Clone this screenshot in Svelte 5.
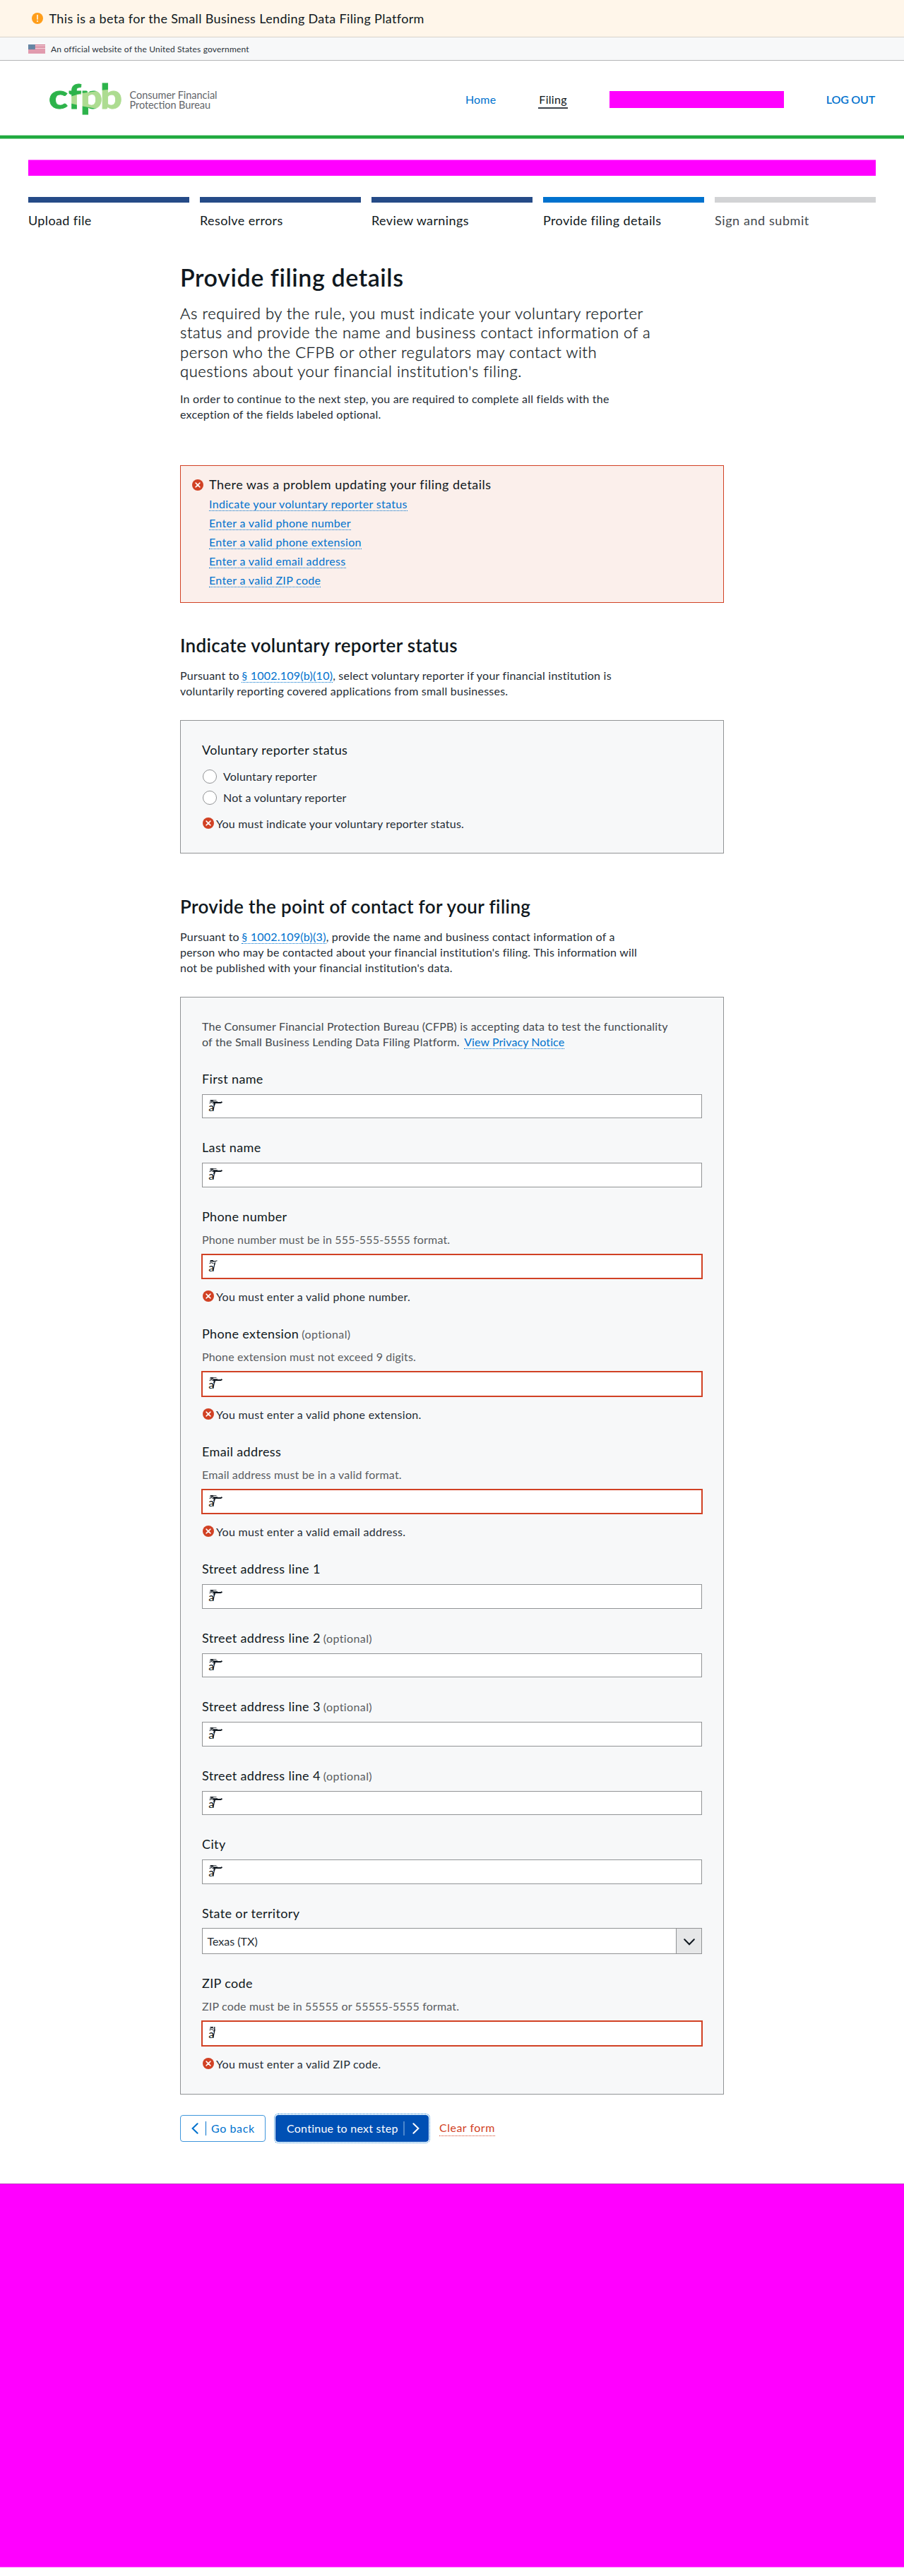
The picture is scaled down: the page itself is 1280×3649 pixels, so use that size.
<script>
  const steps = [
    { label: 'Upload file', state: 'done' },
    { label: 'Resolve errors', state: 'done' },
    { label: 'Review warnings', state: 'done' },
    { label: 'Provide filing details', state: 'current' },
    { label: 'Sign and submit', state: 'todo' }
  ];

  const problems = [
    'Indicate your voluntary reporter status',
    'Enter a valid phone number',
    'Enter a valid phone extension',
    'Enter a valid email address',
    'Enter a valid ZIP code'
  ];

  const fields = [
    { label: 'First name', mark: 'long' },
    { label: 'Last name', mark: 'long' },
    {
      label: 'Phone number',
      hint: 'Phone number must be in 555-555-5555 format.',
      error: 'You must enter a valid phone number.',
      mark: 'mid'
    },
    {
      label: 'Phone extension',
      optional: true,
      hint: 'Phone extension must not exceed 9 digits.',
      error: 'You must enter a valid phone extension.',
      mark: 'long'
    },
    {
      label: 'Email address',
      hint: 'Email address must be in a valid format.',
      error: 'You must enter a valid email address.',
      mark: 'long'
    },
    { label: 'Street address line 1', mark: 'long' },
    { label: 'Street address line 2', optional: true, mark: 'long' },
    { label: 'Street address line 3', optional: true, mark: 'long' },
    { label: 'Street address line 4', optional: true, mark: 'long' },
    { label: 'City', mark: 'long' },
    { label: 'State or territory', value: 'Texas (TX)' },
    {
      label: 'ZIP code',
      hint: 'ZIP code must be in 55555 or 55555-5555 format.',
      error: 'You must enter a valid ZIP code.',
      mark: 'short'
    }
  ];
</script>

{#snippet errorIcon()}
  <svg class="icon" viewBox="0 0 16 16" aria-hidden="true">
    <circle cx="8" cy="8" r="8" fill="#d14124" />
    <path d="M5.1 5.1l5.8 5.8M10.9 5.1l-5.8 5.8" stroke="#fff" stroke-width="1.5" stroke-linecap="round" />
  </svg>
{/snippet}

<div class="beta">
  <svg class="icon" viewBox="0 0 16 16" aria-hidden="true">
    <circle cx="8" cy="8" r="8" fill="#ff9e1b" />
    <path d="M8 3.4v5.8" stroke="#fff" stroke-width="1.5" stroke-linecap="round" />
    <circle cx="8" cy="12" r="1" fill="#fff" />
  </svg>
  <span>This is a beta for the Small Business Lending Data Filing Platform</span>
</div>

<div class="gov">
  <svg class="flag" viewBox="0 0 24 13" aria-hidden="true">
    <rect width="24" height="13" fill="#e39aae" />
    <path d="M0 1.5h24M0 3.5h24M0 5.5h24" stroke="#f6dbe2" stroke-width=".9" />
    <path d="M0 7.5h24M0 9.5h24M0 11.5h24" stroke="#dd92a7" stroke-width=".9" />
    <path d="M9 .5h15M9 2.5h15M9 4.5h15" stroke="#cf6b85" stroke-width=".9" />
    <rect width="9.7" height="7" fill="#587a9c" />
    <path d="M1 1.5h8M1 3.5h8M1 5.5h8" stroke="#7d99b5" stroke-width=".7" stroke-dasharray="1 1" />
  </svg>
  <span>An official website of the United States government</span>
</div>

<header>
  <svg class="logo" viewBox="0 0 240 60" role="img" aria-label="cfpb Consumer Financial Protection Bureau">
    <defs>
      <pattern id="beam" patternUnits="userSpaceOnUse" width="240" height="60">
        <rect width="240" height="60" fill="#2cb34a" />
        <path d="M24 24.5L46 18L73 14.2L76 13.4L106 11V60H85L73 41L47 36.5L24 31Z" fill="#addc91" />
      </pattern>
    </defs>
    <g class="brand">
      <text x="-1" y="40" textLength="27" lengthAdjust="spacingAndGlyphs">c</text>
      <text x="27" y="40" textLength="18" lengthAdjust="spacingAndGlyphs">f</text>
      <text x="44" y="40" textLength="31" lengthAdjust="spacingAndGlyphs">p</text>
      <text x="72" y="40" textLength="31" lengthAdjust="spacingAndGlyphs">b</text>
    </g>
    <g class="agency">
      <text x="113.5" y="26" textLength="124">Consumer Financial</text>
      <text x="113.5" y="40.3" textLength="114.5">Protection Bureau</text>
    </g>
  </svg>
  <nav>
    <a class="home" href="#home">Home</a>
    <a class="filing" href="#filing">Filing</a>
    <span class="account"></span>
    <a class="logout" href="#logout">LOG OUT</a>
  </nav>
</header>
<div class="rule"></div>

<div class="institution"></div>

<ol class="steps">
  {#each steps as step}
    <li class={step.state}>{step.label}</li>
  {/each}
</ol>

<main>
  <h1>Provide filing details</h1>
  <p class="lead">
    As required by the rule, you must indicate your voluntary reporter<br />
    status and provide the name and business contact information of a<br />
    person who the CFPB or other regulators may contact with<br />
    questions about your financial institution's filing.
  </p>
  <p class="intro">
    In order to continue to the next step, you are required to complete all fields with the<br />
    exception of the fields labeled optional.
  </p>

  <section class="alert">
    {@render errorIcon()}
    <div>
      <strong>There was a problem updating your filing details</strong>
      <ul>
        {#each problems as problem}
          <li><a href="#form">{problem}</a></li>
        {/each}
      </ul>
    </div>
  </section>

  <h2>Indicate voluntary reporter status</h2>
  <p>
    Pursuant to <a href="#b10">§ 1002.109(b)(10)</a>, select voluntary reporter if your financial institution is<br />
    voluntarily reporting covered applications from small businesses.
  </p>
  <section class="card status">
    <div class="label">Voluntary reporter status</div>
    <div class="radios">
      <label><span class="radio"></span>Voluntary reporter</label>
      <label><span class="radio"></span>Not a voluntary reporter</label>
    </div>
    <div class="error">{@render errorIcon()}You must indicate your voluntary reporter status.</div>
  </section>

  <h2 class="second">Provide the point of contact for your filing</h2>
  <p>
    Pursuant to <a href="#b3">§ 1002.109(b)(3)</a>, provide the name and business contact information of a<br />
    person who may be contacted about your financial institution's filing. This information will<br />
    not be published with your financial institution's data.
  </p>
  <section class="card contact">
    <p class="privacy">
      The Consumer Financial Protection Bureau (CFPB) is accepting data to test the functionality<br />
      of the Small Business Lending Data Filing Platform. <a href="#privacy">View Privacy Notice</a>
    </p>
    {#each fields as field}
      <div class="field">
        <div class="label">
          {field.label}{#if field.optional}<small>(optional)</small>{/if}
        </div>
        {#if field.hint}<div class="hint">{field.hint}</div>{/if}
        {#if field.value}
          <div class="select">
            <span>{field.value}</span>
            <span class="arrow">
              <svg viewBox="0 0 16 10" aria-hidden="true"><path d="M1.2 1.2L8 8.2L14.8 1.2" fill="none" stroke="#101820" stroke-width="2" stroke-linecap="round" /></svg>
            </span>
          </div>
        {:else}
          <div class={['input', field.error && 'invalid']}>
            <svg class="mark" viewBox="0 0 22 20" aria-hidden="true">
              <text x="0.2" y="16.6">a</text>
              <path d="M1.5 5.6l3-1 3 1.2M2 3.4l3-.9 2.6.8M2.6 1.5h4.4" stroke-width="1" />
              <path d="M9.2 5L6.8 16.3" stroke-width="1.2" />
              {#if field.mark === 'long'}
                <path d="M3 1.5h8.5M4 3.5h9" stroke-width="1.2" stroke-opacity=".75" />
                <path d="M7 5h10.5l2-1.2" stroke-width="2" />
                <path d="M9 5.5L8 9" stroke-width="2" />
              {:else if field.mark === 'mid'}
                <path d="M3 2.5h7l2.5-.8M9.5 3.5L8.5 8" stroke-width="1.1" />
              {:else}
                <path d="M8.8 1v4l-1 3" stroke-width="1.3" />
              {/if}
            </svg>
          </div>
        {/if}
        {#if field.error}
          <div class="error">{@render errorIcon()}{field.error}</div>
        {/if}
      </div>
    {/each}
  </section>

  <div class="actions">
    <button class="back">
      <svg viewBox="0 0 10 16" aria-hidden="true"><path d="M8.6 1.2L1.6 8l7 6.8" /></svg>
      <i></i><span>Go back</span>
    </button>
    <button class="next">
      <span>Continue to next step</span><i></i>
      <svg viewBox="0 0 10 16" aria-hidden="true"><path d="M1.4 1.2L8.4 8l-7 6.8" /></svg>
    </button>
    <a class="clear" href="#clear">Clear form</a>
  </div>
</main>

<footer></footer>

<style>
  :global(body) {
    background: #fff;
    font-family: Lato, sans-serif;
    color: #101820;
  }
  :global(#app) {
    width: 1280px;
    height: 3649px;
    overflow: hidden;
  }
  a {
    color: #0072ce;
    text-decoration: none;
  }
  .icon {
    width: 16px;
    height: 16px;
    flex: none;
    display: block;
  }

  .beta {
    height: 52px;
    border-bottom: 1px solid #d8d3cc;
    background: #fff6ea;
    display: flex;
    align-items: center;
    padding-left: 45px;
    gap: 8.5px;
    font-size: 18px;
    letter-spacing: 0.35px;
  }
  .gov {
    height: 32px;
    border-bottom: 1px solid #b4b5b6;
    background: #f7f8f9;
    display: flex;
    align-items: center;
    padding-left: 40px;
    gap: 8px;
    font-size: 12px;
    letter-spacing: 0.18px;
    color: #2b333b;
  }
  .gov span {
    padding-top: 1px;
  }
  .flag {
    width: 24px;
    height: 13px;
    opacity: 0.95;
  }

  header {
    height: 105px;
    display: flex;
    justify-content: space-between;
    padding: 0 41px 0 70px;
  }
  .logo {
    width: 240px;
    height: 60px;
    margin-top: 28px;
  }
  .brand {
    font-size: 48px;
    font-weight: 900;
    fill: url(#beam);
    stroke: url(#beam);
    stroke-width: 0.8;
  }
  .agency {
    font-size: 14.5px;
    fill: #63666a;
  }
  nav {
    display: flex;
    align-items: center;
    height: 24px;
    margin-top: 43px;
    font-size: 16px;
    letter-spacing: 0.2px;
  }
  nav a {
    line-height: 22px;
  }
  .filing {
    margin-left: 60px;
    padding: 2px 1px 0;
    border-bottom: 2px solid #3b424a;
    color: #101820;
    letter-spacing: 0.3px;
  }
  .account {
    width: 247px;
    height: 24.5px;
    margin: 0 60px 0 59px;
    background: #f0f;
  }
  .logout {
    font-weight: 600;
    letter-spacing: -0.2px;
  }
  .rule {
    height: 6px;
    background: linear-gradient(#bde5c6 1px, #20aa3f 1px 5px, #8fd4a0 5px);
  }

  .institution {
    height: 23px;
    margin: 29px 40px 30px;
    background: linear-gradient(#ff80ff 1px, #f0f 1px);
  }

  .steps {
    display: grid;
    grid-template-columns: repeat(5, 1fr);
    gap: 15px;
    margin: 0 40px;
    padding: 0;
    list-style: none;
    font-size: 18px;
    line-height: 22px;
    letter-spacing: 0.38px;
  }
  .steps li {
    padding-top: 14px;
    border-top: 8px solid #254b87;
  }
  .steps .current {
    border-color: #0072ce;
  }
  .steps .todo {
    border-color: #d2d3d5;
    color: #43484e;
    letter-spacing: 0.58px;
  }

  main {
    width: 770px;
    margin: 49px 0 0 255px;
    white-space: nowrap;
  }
  h1 {
    margin: 0 0 -1px;
    font-size: 34px;
    line-height: 42px;
    font-weight: 600;
    letter-spacing: 0.58px;
  }
  h2 {
    margin: 44.5px 0 -0.5px;
    font-size: 26px;
    line-height: 32px;
    font-weight: 600;
    letter-spacing: 0.31px;
  }
  h2.second {
    margin-top: 59.5px;
    letter-spacing: 0.36px;
  }
  p {
    margin: 16px 0 0;
    font-size: 16px;
    line-height: 22px;
    letter-spacing: 0.22px;
    color: #252d35;
  }
  p a {
    margin-left: -1px;
    border-bottom: 1px dotted #0072ce;
    letter-spacing: 0.24px;
  }
  .lead {
    margin-top: 16.5px;
    font-size: 22px;
    line-height: 27.5px;
    font-weight: 300;
    letter-spacing: 0.56px;
    color: #101820;
    -webkit-text-stroke: 0.3px #101820;
  }
  .intro {
    margin-top: 14.5px;
    letter-spacing: 0.23px;
  }

  .alert {
    height: 178px;
    margin-top: 60.5px;
    padding: 15px 15px 0 16px;
    border: 1px solid #d14124;
    background: #fbefeb;
    display: flex;
    gap: 8px;
  }
  .alert .icon {
    margin-top: 4px;
  }
  .alert strong {
    display: block;
    font-size: 18px;
    line-height: 22px;
    font-weight: 400;
    letter-spacing: 0.48px;
  }
  .alert ul {
    margin: 6px 0 0;
    padding: 0;
    list-style: none;
    font-size: 16px;
    letter-spacing: 0.32px;
  }
  .alert li {
    height: 27px;
    line-height: 22px;
  }
  .alert a {
    border-bottom: 1px dotted #0072ce;
  }

  .card {
    box-sizing: border-box;
    margin-top: 30px;
    padding: 30px;
    border: 1px solid #919395;
    background: #f7f8f9;
  }
  .status {
    height: 189px;
  }
  .contact {
    height: 1555px;
  }
  .label {
    display: flex;
    align-items: baseline;
    gap: 4px;
    height: 22px;
    font-size: 18px;
    line-height: 22px;
    letter-spacing: 0.36px;
  }
  .label small {
    font-size: 16px;
    line-height: 20px;
    color: #5a5d61;
    letter-spacing: 0.4px;
  }
  .radios {
    display: grid;
    gap: 10px;
    margin: 17px 0 16px;
  }
  .radios label {
    display: flex;
    align-items: center;
    gap: 9px;
    height: 20px;
    font-size: 16px;
    line-height: 20px;
    letter-spacing: 0.18px;
    color: #252d35;
  }
  .radio {
    box-sizing: border-box;
    width: 20px;
    height: 20px;
    margin-left: 1px;
    border: 1px solid #919395;
    border-radius: 50%;
    background: #fff;
  }
  .error {
    display: flex;
    gap: 3.5px;
    font-size: 16px;
    line-height: 22px;
    letter-spacing: 0.21px;
    color: #252d35;
  }
  .error .icon {
    margin: 2px 0 0 0.5px;
  }

  .privacy {
    margin: 0;
    color: #43484e;
    letter-spacing: 0.2px;
  }
  .privacy a {
    margin-left: 2px;
    letter-spacing: 0.08px;
  }
  .field {
    margin-top: 30px;
  }
  .hint {
    margin: 11px 0 -1px;
    font-size: 16px;
    line-height: 22px;
    color: #5a5d61;
    letter-spacing: 0.17px;
  }
  .input {
    box-sizing: border-box;
    height: 34.5px;
    margin-top: 11px;
    padding: 6px 0 0 7.5px;
    border: 1px solid #919395;
    background: #fff;
  }
  .invalid {
    border-color: #d14124;
    box-shadow: 0 0 0 1px #d14124;
  }
  .mark {
    display: block;
    width: 22px;
    height: 20px;
    fill: none;
    stroke: #101820;
  }
  .mark text {
    font-size: 16px;
    fill: #101820;
    stroke: none;
  }
  .field .error {
    margin-top: 15px;
    letter-spacing: 0.3px;
  }
  .select {
    box-sizing: border-box;
    display: flex;
    justify-content: space-between;
    height: 37px;
    margin-top: 10.5px;
    padding-left: 6.5px;
    border: 1px solid #919395;
    background: #fff;
    font-size: 16px;
    line-height: 36px;
    color: #252d35;
  }
  .arrow {
    display: grid;
    place-items: center;
    width: 35px;
    border-left: 1px solid #919395;
    background: #e6e7e8;
  }
  .arrow svg {
    width: 16px;
    height: 10px;
    margin-top: 3px;
  }

  .actions {
    display: flex;
    align-items: center;
    height: 38px;
    margin-top: 29px;
    font-size: 16px;
  }
  button {
    box-sizing: border-box;
    display: flex;
    align-items: center;
    height: 38px;
    padding: 0 15px;
    border: 1px solid #3f96dc;
    border-radius: 4px;
    background: #fff;
    font: 400 16px Lato, sans-serif;
    color: #0072ce;
    white-space: nowrap;
  }
  button svg {
    flex: none;
    width: 10px;
    height: 16px;
    fill: none;
    stroke: currentColor;
    stroke-width: 2;
    stroke-linecap: round;
  }
  button i {
    flex: none;
    width: 1px;
    height: 20px;
    background: #0072ce;
  }
  .back {
    width: 121px;
  }
  .back i {
    margin: 0 7px 0 10px;
  }
  .back span {
    letter-spacing: 0.6px;
  }
  .next {
    width: 217px;
    margin-left: 14px;
    border-color: #0050b4;
    background: #0050b4;
    outline: 1px dotted #0072ce;
    outline-offset: 1px;
    color: #fff;
  }
  .next span {
    letter-spacing: 0.25px;
  }
  .next i {
    width: 2px;
    margin: 0 11px 0 7px;
    background: #4c87cc;
  }
  .clear {
    margin-left: 15px;
    border-bottom: 1px dotted #d14124;
    color: #d14124;
    line-height: 22px;
    letter-spacing: 0.5px;
  }

  footer {
    height: 544px;
    margin-top: 59px;
    box-sizing: border-box;
    border-top: 1px solid #c23fc2;
    border-bottom: 1px solid #ff80ff;
    background: #f0f;
  }
</style>
